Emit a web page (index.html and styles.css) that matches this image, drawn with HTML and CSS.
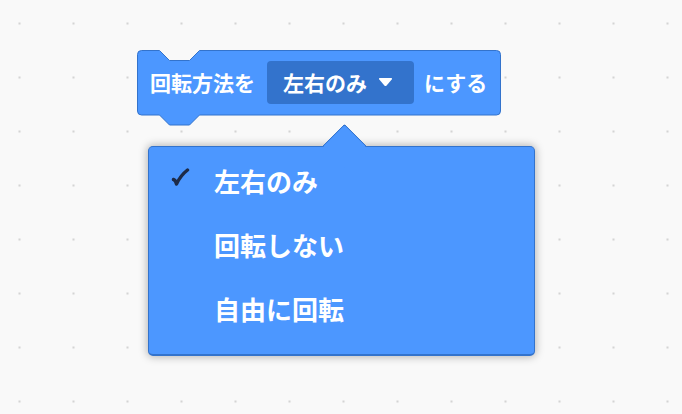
FILE: index.html
```html
<!DOCTYPE html>
<html lang="ja">
<head>
<meta charset="UTF-8" />
<meta name="viewport" content="width=device-width, initial-scale=1" />
<title>回転方法を設定</title>
<link rel="stylesheet" href="styles.css">
</head>
<body>

  <div class="workspace">

    <!-- Motion block -->
    <div class="block">
      <svg class="block-shape" width="364" height="76" viewBox="0 0 364 76">
        <path d="M0.5 4.5 A4 4 0 0 1 4.5 0.5 L22.5 0.5 L32.5 10.5 L52.5 10.5 L62.5 0.5 L359.5 0.5 A4 4 0 0 1 363.5 4.5 L363.5 61 A4 4 0 0 1 359.5 65 L62.5 65 L52.5 75 L32.5 75 L22.5 65 L4.5 65 A4 4 0 0 1 0.5 61 Z"
              fill="#4c97ff" stroke="#3373cc" stroke-width="1" />
      </svg>
      <div class="block-row">
        <span class="label">回転方法を</span>
        <span class="field">
          左右のみ
          <svg class="caret" width="15" height="10" viewBox="0 0 15 10">
            <path d="M2 1 L13 1 Q14.8 1 13.7 2.4 L8.6 8.4 Q7.5 9.6 6.4 8.4 L1.3 2.4 Q0.2 1 2 1 Z" fill="#fff" />
          </svg>
        </span>
        <span class="label">にする</span>
      </div>
    </div>

    <!-- Dropdown -->
    <div class="menu">
      <div class="menu-pointer"></div>
      <div class="menu-item">
        <svg class="check" width="19" height="19" viewBox="0 0 19 19">
          <path d="M2.5 11.5 Q4.5 12 5.5 16 Q9.5 7.5 16.5 2" fill="none" stroke="#1d2b48" stroke-width="3.4" stroke-linecap="round" stroke-linejoin="round" />
        </svg>
        <span>左右のみ</span>
      </div>
      <div class="menu-item">
        <span>回転しない</span>
      </div>
      <div class="menu-item">
        <span>自由に回転</span>
      </div>
    </div>

  </div>

</body>
</html>
```

FILE: styles.css
```css
* {
  margin: 0; padding: 0; box-sizing: border-box;
}
body {
  width: 682px;
  height: 414px;
  overflow: hidden;
  background-color: #f9f9f9;
  background-image: radial-gradient(circle, #d4d4d4 0 1px, transparent 1.6px);
  background-size: 54px 54px;
  background-position: -7.5px -3.5px;
  font-family: "Noto Sans CJK JP", "Liberation Sans", sans-serif;
  font-weight: 700;
  color: #fff;
}
.workspace {
  display: flex;
  flex-direction: column;
  align-items: flex-start;
  padding-top: 50px;
}

/* Block */
.block {
  position: relative;
  width: 364px;
  height: 76px;
  margin-left: 137px;
}
.block-shape {
  position: absolute;
  top: 0;
  left: 0;
}
.block-row {
  position: relative;
  display: flex;
  align-items: center;
  height: 64px;
  padding: 0 12px 0 13px;
  font-size: 21px;
  line-height: 1;
}
.field {
  display: flex;
  align-items: center;
  height: 43px;
  margin: 0 10px 0 12px;
  padding: 0 19px 0 16px;
  width: 147px;
  background: #3373cc;
  border-radius: 4px;
}
.caret {
  margin-left: 11px;
}

/* Dropdown menu */
.menu {
  position: relative;
  width: 387px;
  height: 210px;
  margin: 20px 0 0 148px;
  padding: 2px 0 8px;
  background: #4c97ff;
  border: 1px solid #3373cc;
  border-bottom-width: 2px;
  border-radius: 5px;
  box-shadow: 0 0 8px 1px rgba(0, 0, 0, 0.28);
  font-size: 26px;
  line-height: 1;
}
.menu-pointer {
  position: absolute;
  top: -17px;
  left: 180px;
  width: 31px;
  height: 31px;
  background: #4c97ff;
  border-top: 1px solid #3373cc;
  border-left: 1px solid #3373cc;
  border-top-left-radius: 3px;
  transform: rotate(45deg);
}
.menu-item {
  position: relative;
  display: flex;
  align-items: center;
  height: 64px;
  padding-left: 65px;
}
.check {
  position: absolute;
  left: 22px;
  top: 19px;
}
```
